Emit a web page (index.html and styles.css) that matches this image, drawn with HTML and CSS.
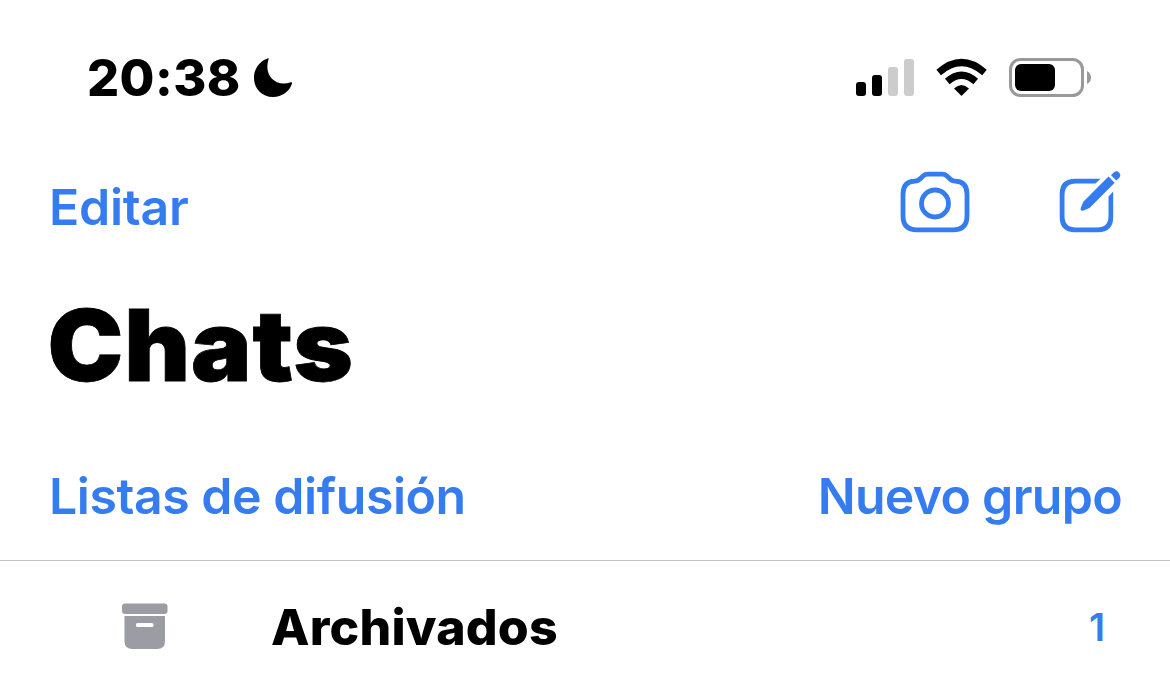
FILE: index.html
```html
<!DOCTYPE html>
<html lang="es">
<head>
<meta charset="utf-8">
<title>Chats</title>
<link rel="stylesheet" href="styles.css">
</head>
<body>
<div class="screen">
  <header class="status">
    <div class="clock"><span class="time">20:38</span>
      <svg class="moon" width="40" height="40" viewBox="0 0 40 40"><path d="M15.500 1.500C16 .6 15.500 .1 14.500 .4C6 3.500 1 11 1 19.500C1 31 9 39 20 39C29 39 36.500 33.500 39 25.500Q39.500 23.700 37.700 24.300C30 27 23 25 18.700 20.500C14 15 13.500 8 15.500 1.500Z"/></svg>
    </div>
    <svg class="signals" width="240" height="44" viewBox="853 55 240 44">
      <rect x="856" y="82" width="10" height="14" rx="3"/><rect x="872" y="75" width="10" height="21" rx="3"/>
      <g fill="#ccc"><rect x="888" y="67" width="10" height="29" rx="3"/><rect x="904" y="59" width="10" height="37" rx="3"/></g>
      <g fill="none" stroke="#000" stroke-width="7"><path d="M938.700 72.500Q961.500 52.500 984.500 72.500"/><path d="M947.300 81.500Q961.500 69 975.700 81.500"/></g>
      <path d="M954 88.500Q961.500 81.500 969 88.500L962 95.500Q961.500 96 961 95.500Z"/>
      <rect x="1010.500" y="59.500" width="72" height="36" rx="10" fill="none" stroke="#999" stroke-width="3"/>
      <rect x="1015" y="64" width="40" height="27" rx="6"/><path d="M1087 71Q1091 73 1091 77.500T1087 84Z" fill="#999"/>
    </svg>
  </header>
  <nav class="toolbar">
    <a class="link edit">Editar</a>
    <svg class="actions" width="224" height="66" viewBox="899 170 224 66" fill="none" stroke="#357cf0" stroke-width="4.800">
      <path d="M915 181.200C919 181.200 920.500 178.500 923 176Q925 174.200 928 174.200H942Q945 174.200 947 176C949.500 178.500 951 181.200 955 181.200Q967 181.500 967 194V216Q967 229.800 953 229.800H917Q903 229.800 903 216V194Q903 181.500 915 181.200Z"/><circle cx="935" cy="203.500" r="13.500"/>
      <g stroke="none" fill="#357cf0">
        <path d="M1100.500 178.700H1075Q1059.700 178.700 1059.700 194V217Q1059.700 232.200 1075 232.200H1098Q1113.200 232.200 1113.200 217V191.500L1108.500 196.500V216Q1108.500 227.500 1097 227.500H1076Q1064.500 227.500 1064.500 216V195Q1064.500 183.500 1076 183.500H1095.500Z"/>
        <path d="M1108.500 176.500L1114.700 182.700L1089.500 208L1083.500 210.500Q1080 211.300 1080.800 207.800L1083.300 201.800Z"/>
        <path d="M1111 175.200L1114 172.300Q1117 170 1119.200 172.700Q1121.500 175.200 1119 178L1116.300 180.600Z"/>
      </g>
    </svg>
  </nav>
  <h1 class="title">Chats</h1>
  <div class="lists"><a class="link broadcast">Listas de difusión</a><a class="link group">Nuevo grupo</a></div>
  <div class="archive">
    <svg class="box" width="46" height="46" viewBox="0 0 46 46" fill="#9c9ca4"><rect y=".5" width="45.500" height="10.500" rx="3"/><path d="M2.500 13H43V38Q43 46 35 46H10.500Q2.500 46 2.500 38Z"/><rect x="14" y="20" width="17.500" height="4" rx="1.500" fill="#fff"/></svg>
    <span class="label">Archivados</span><span class="count">1</span>
  </div>
</div>
</body>
</html>
```
FILE: styles.css
```css
body{margin:0;background:#fff;color:#000;font-family:Inter,sans-serif}
.screen{width:1170px;height:689px;overflow:hidden}
svg{display:block;flex:none}
.status{display:flex;justify-content:space-between;height:101px;padding:55px 77px 0 87px;box-sizing:border-box}
.clock{display:flex}
.time{width:166px;font-size:50.5px;font-weight:800;line-height:46px;letter-spacing:.4px}
.moon{margin-top:3px}
.toolbar{display:flex;justify-content:space-between;height:135px;padding:69px 47px 0 49px;box-sizing:border-box}
.link{color:#357cf0;font-size:50px;font-weight:600;line-height:60px;letter-spacing:-.45px;white-space:nowrap}
.edit{margin-top:7px;letter-spacing:-.25px}
.group{letter-spacing:-.7px;margin-right:1px}
.title{margin:0;padding:49px 0 0 46px;height:230px;box-sizing:border-box;font-size:98.5px;line-height:122px;font-weight:900;letter-spacing:.9px;-webkit-text-stroke:.8px #000;transform:scaleX(1.03);transform-origin:0 0}
.lists{height:94px;display:flex;justify-content:space-between;padding:0 47px 0 49px;border-bottom:1px solid #c3c3c5}
.archive{display:flex;align-items:center;height:130px;padding:0 64px 0 122px}
.label{font-size:50px;font-weight:800;margin:2px 0 0 103px;letter-spacing:.2px}
.count{margin:2px 1px 0 auto;color:#357cf0;font-size:38px;font-weight:600}
```
